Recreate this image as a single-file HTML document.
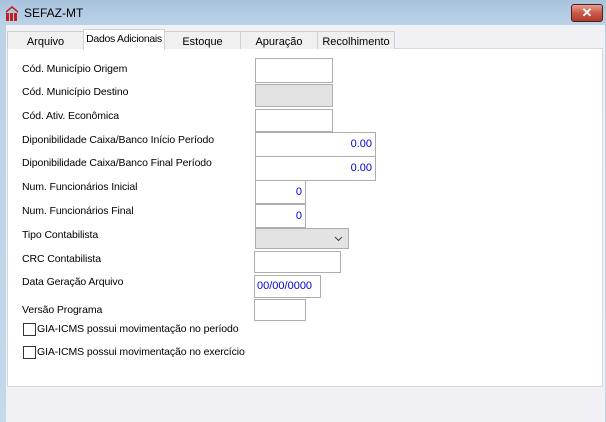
<!DOCTYPE html>
<html><head><style>
body{margin:0;width:606px;height:422px;overflow:hidden;font-family:"Liberation Sans",sans-serif;font-size:11px;color:#000;}
.win{position:absolute;left:0;top:0;width:606px;height:422px;background:linear-gradient(#a9c3dd,#bcd2e8 25px,#c5d8ec);}
.client{position:absolute;left:6px;top:25px;width:599px;height:397px;background:#f0f0f5;}
.title{position:absolute;left:24px;top:6px;font-size:12px;color:#000;}
.close{position:absolute;left:571px;top:4px;width:30px;height:16px;border:1px solid #4a2026;border-radius:3px;background:linear-gradient(#e8a090,#c85a48 50%,#b03a28);color:#fff;font-weight:bold;text-align:center;line-height:16px;font-size:13px;}
.tab{position:absolute;top:31px;height:17px;border:1px solid #d0d0d0;border-bottom:none;background:#f0f0f0;text-align:center;line-height:20px;font-size:11px;white-space:nowrap;overflow:hidden;}
.tab.sel{top:29px;height:20px;background:#fff;z-index:2;line-height:18px;font-size:10.5px;letter-spacing:-0.3px;}
.panel{position:absolute;left:7px;top:48px;width:594px;height:337px;background:#fff;border:1px solid #d8d8d8;}
.l{position:absolute;left:22px;font-size:10.5px;letter-spacing:-0.1px;white-space:nowrap;}
.i{position:absolute;box-sizing:border-box;border:1px solid #adadad;background:#fff;color:#0000d0;font-size:11px;line-height:20px;padding:0 3px;}
.g{background:#e3e3e3;}
.cb{position:absolute;left:23px;width:11px;height:11px;border:1px solid #333;background:#fff;}
</style></head><body>
<div class="win"></div>
<svg style="position:absolute;left:5px;top:5px" width="14" height="16" viewBox="0 0 14 16"><path d="M1 6 L7 1 L13 6 L13 8 L7 3 L1 8Z" fill="#c02020"/><rect x="1" y="8" width="3" height="8" fill="#c02020"/><rect x="5" y="8" width="3" height="8" fill="#c02020"/><rect x="9" y="8" width="3" height="8" fill="#c02020"/></svg>
<div class="title">SEFAZ-MT</div>
<div class="close">✕</div>
<div class="client"></div>
<div class="panel"></div>
<div class="tab" style="left:7px;width:75px">Arquivo</div>
<div class="tab sel" style="left:83px;width:80px">Dados Adicionais</div>
<div class="tab" style="left:164px;width:75px">Estoque</div>
<div class="tab" style="left:240px;width:76px">Apuração</div>
<div class="tab" style="left:317px;width:76px">Recolhimento</div>

<div class="l" style="top:63px">Cód. Município Origem</div>
<div class="l" style="top:86px">Cód. Município Destino</div>
<div class="l" style="top:110px">Cód. Ativ. Econômica</div>
<div class="l" style="top:134px">Diponibilidade Caixa/Banco Início Período</div>
<div class="l" style="top:157px">Diponibilidade Caixa/Banco Final Período</div>
<div class="l" style="top:181px">Num. Funcionários Inicial</div>
<div class="l" style="top:205px">Num. Funcionários Final</div>
<div class="l" style="top:229px">Tipo Contabilista</div>
<div class="l" style="top:253px">CRC Contabilista</div>
<div class="l" style="top:276px">Data Geração Arquivo</div>
<div class="l" style="top:304px">Versão Programa</div>

<div class="i" style="left:255px;top:58px;width:78px;height:25px"></div>
<div class="i g" style="left:255px;top:84px;width:78px;height:23px"></div>
<div class="i" style="left:255px;top:109px;width:78px;height:23px"></div>
<div class="i" style="left:255px;top:132px;width:121px;height:25px;text-align:right;line-height:23px">0.00</div>
<div class="i" style="left:255px;top:156px;width:121px;height:25px;text-align:right;line-height:23px">0.00</div>
<div class="i" style="left:255px;top:180px;width:51px;height:24px;text-align:right;line-height:22px">0</div>
<div class="i" style="left:255px;top:204px;width:51px;height:24px;text-align:right;line-height:22px">0</div>
<div class="i g" style="left:255px;top:228px;width:94px;height:21px"><svg style="position:absolute;right:5px;top:7px" width="9" height="6"><path d="M1 1 L4.5 4.5 L8 1" stroke="#444" fill="none"/></svg></div>
<div class="i" style="left:254px;top:251px;width:87px;height:22px"></div>
<div class="i" style="left:254px;top:275px;width:67px;height:23px;line-height:21px;padding:0 2px">00/00/0000</div>
<div class="i" style="left:254px;top:299px;width:52px;height:22px"></div>

<div class="cb" style="top:323px"></div>
<div class="l" style="left:37px;top:323px">GIA-ICMS possui movimentação no período</div>
<div class="cb" style="top:346px"></div>
<div class="l" style="left:37px;top:346px">GIA-ICMS possui movimentação no exercício</div>
</body></html>
